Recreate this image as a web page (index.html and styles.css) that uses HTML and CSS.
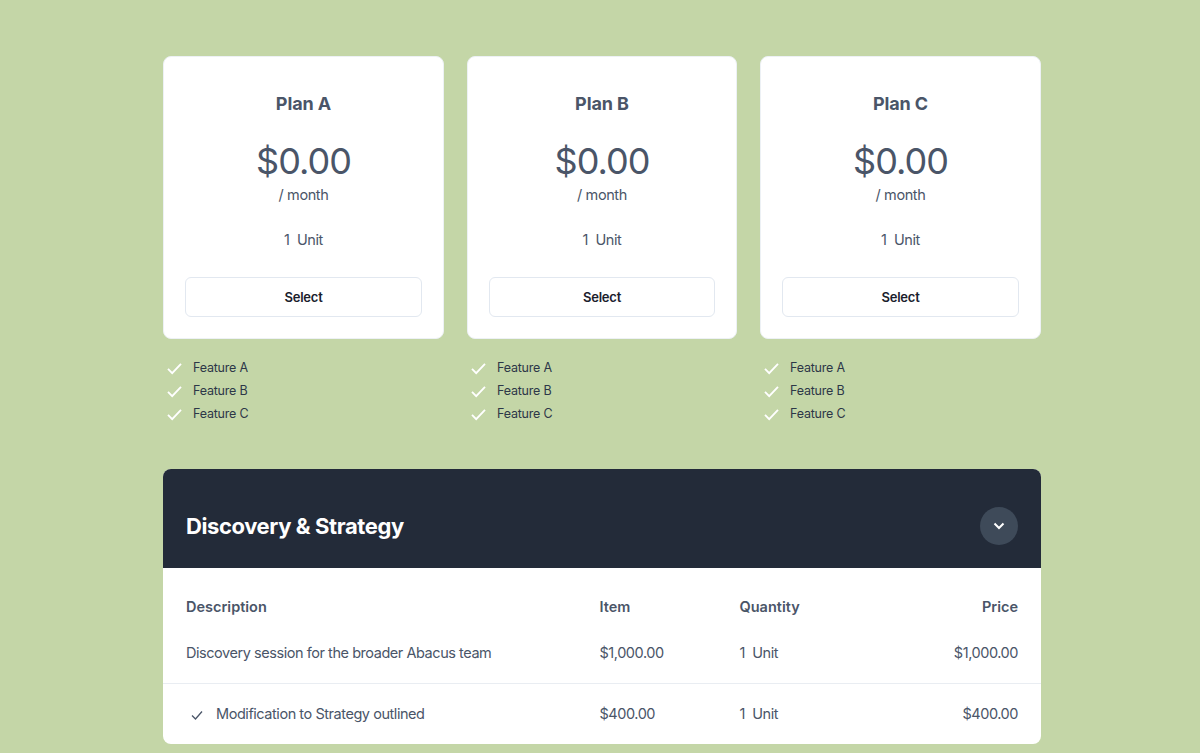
FILE: index.html
```html
<!DOCTYPE html>
<html lang="en">

<head>
    <meta charset="UTF-8">
    <meta name="viewport" content="width=device-width, initial-scale=1.0">
    <title>Plans</title>
    <link rel="stylesheet" href="styles.css">
</head>

<body>
    <div class="container">
        <div class="plans">
            <div class="plan">
                <div class="card">
                    <h2>Plan A</h2>
                    <div class="amount">$0.00</div>
                    <div class="period">/ month</div>
                    <div class="units">1&nbsp; Unit</div>
                    <button class="select-button">Select</button>
                </div>
                <ul class="features">
                    <li><svg viewBox="0 0 16 14"><path d="M1 7.5 5.5 12 15 2"/></svg>Feature A</li>
                    <li><svg viewBox="0 0 16 14"><path d="M1 7.5 5.5 12 15 2"/></svg>Feature B</li>
                    <li><svg viewBox="0 0 16 14"><path d="M1 7.5 5.5 12 15 2"/></svg>Feature C</li>
                </ul>
            </div>
            <div class="plan">
                <div class="card">
                    <h2>Plan B</h2>
                    <div class="amount">$0.00</div>
                    <div class="period">/ month</div>
                    <div class="units">1&nbsp; Unit</div>
                    <button class="select-button">Select</button>
                </div>
                <ul class="features">
                    <li><svg viewBox="0 0 16 14"><path d="M1 7.5 5.5 12 15 2"/></svg>Feature A</li>
                    <li><svg viewBox="0 0 16 14"><path d="M1 7.5 5.5 12 15 2"/></svg>Feature B</li>
                    <li><svg viewBox="0 0 16 14"><path d="M1 7.5 5.5 12 15 2"/></svg>Feature C</li>
                </ul>
            </div>
            <div class="plan">
                <div class="card">
                    <h2>Plan C</h2>
                    <div class="amount">$0.00</div>
                    <div class="period">/ month</div>
                    <div class="units">1&nbsp; Unit</div>
                    <button class="select-button">Select</button>
                </div>
                <ul class="features">
                    <li><svg viewBox="0 0 16 14"><path d="M1 7.5 5.5 12 15 2"/></svg>Feature A</li>
                    <li><svg viewBox="0 0 16 14"><path d="M1 7.5 5.5 12 15 2"/></svg>Feature B</li>
                    <li><svg viewBox="0 0 16 14"><path d="M1 7.5 5.5 12 15 2"/></svg>Feature C</li>
                </ul>
            </div>
        </div>

        <div class="section">
            <div class="section-header">
                <h3>Discovery &amp; Strategy</h3>
                <div class="toggle"><svg viewBox="0 0 12 8"><path d="M1.5 1.5 6 6l4.5-4.5"/></svg></div>
            </div>
            <div class="row row-head">
                <div>Description</div>
                <div>Item</div>
                <div>Quantity</div>
                <div class="price">Price</div>
            </div>
            <div class="row row-first">
                <div>Discovery session for the broader Abacus team</div>
                <div>$1,000.00</div>
                <div>1&nbsp; Unit</div>
                <div class="price">$1,000.00</div>
            </div>
            <div class="row row-option">
                <div class="option"><svg viewBox="0 0 12 10"><path d="M1 5.5 4.5 9 11 1.5"/></svg>Modification to Strategy outlined</div>
                <div>$400.00</div>
                <div>1&nbsp; Unit</div>
                <div class="price">$400.00</div>
            </div>
        </div>
    </div>
</body>

</html>
```

FILE: styles.css
```css
body {
    font-family: 'Inter', 'Liberation Sans', sans-serif;
    background-color: #c4d6a7;
    margin: 0;
    color: #4a5568;
}

.container {
    width: 878px;
    margin-left: 163px;
    padding: 56px 0 8px;
}

.plans {
    display: grid;
    grid-template-columns: 281px 270px 281px;
    column-gap: 23px;
}

.card {
    background-color: #fff;
    border: 1px solid #edf1f5;
    border-radius: 8px;
    box-sizing: border-box;
    height: 283px;
    padding: 33px 21px 0;
    text-align: center;
}

h2 {
    margin: 0;
    font-size: 18px;
    line-height: 28px;
    font-weight: 700;
    letter-spacing: -0.1px;
}

.amount {
    margin-top: 21px;
    font-size: 36px;
    line-height: 44px;
    font-weight: 400;
    letter-spacing: -1px;
}

.period {
    font-size: 14.5px;
    line-height: 24px;
    letter-spacing: -0.4px;
}

.units {
    margin-top: 21px;
    font-size: 14.5px;
    line-height: 24px;
    letter-spacing: -0.4px;
}

.select-button {
    display: block;
    width: 100%;
    height: 40px;
    margin-top: 25px;
    background-color: #fff;
    border: 1px solid #e2e8f0;
    border-radius: 6px;
    font-family: inherit;
    font-size: 13px;
    font-weight: 600;
    letter-spacing: -0.2px;
    color: #1a202c;
}

.features {
    list-style-type: none;
    margin: 17px 0 0;
    padding: 0;
    font-size: 12.5px;
    letter-spacing: -0.2px;
    color: #2d3748;
}

.features li {
    display: flex;
    align-items: center;
    height: 23px;
}

.features svg {
    width: 15px;
    height: 13px;
    margin: 2px 11px 0 4px;
    fill: none;
    stroke: #fff;
    stroke-width: 2;
}

.section {
    margin-top: 44px;
    background-color: #fff;
    border-radius: 8px;
    overflow: hidden;
}

.section-header {
    box-sizing: border-box;
    display: flex;
    justify-content: space-between;
    align-items: center;
    height: 99px;
    padding: 15px 23px 0;
    background-color: #232b39;
}

h3 {
    margin: 0;
    font-size: 22px;
    font-weight: 700;
    letter-spacing: -0.4px;
    color: #fff;
}

.toggle {
    display: flex;
    justify-content: center;
    align-items: center;
    width: 38px;
    height: 38px;
    border-radius: 50%;
    background-color: #3e4a59;
}

.toggle svg {
    width: 12px;
    height: 8px;
    fill: none;
    stroke: #fff;
    stroke-width: 2;
}

.row {
    display: grid;
    grid-template-columns: 413.5px 140px 1fr 130px;
    align-items: center;
    padding: 0 23px;
    font-size: 14.5px;
    letter-spacing: -0.45px;
}

.row-head {
    box-sizing: border-box;
    height: 65px;
    padding-top: 11px;
    font-weight: 600;
    letter-spacing: 0;
}

.row-first {
    height: 39px;
}

.row-option {
    margin-top: 11px;
    height: 59px;
    padding-bottom: 1px;
    border-top: 1px solid #e9edf2;
}

.price {
    text-align: right;
}

.option {
    display: flex;
    align-items: center;
}

.option svg {
    width: 12px;
    height: 10px;
    margin: 2px 13px 0 5px;
    fill: none;
    stroke: #4a5568;
    stroke-width: 1.3;
}
```
